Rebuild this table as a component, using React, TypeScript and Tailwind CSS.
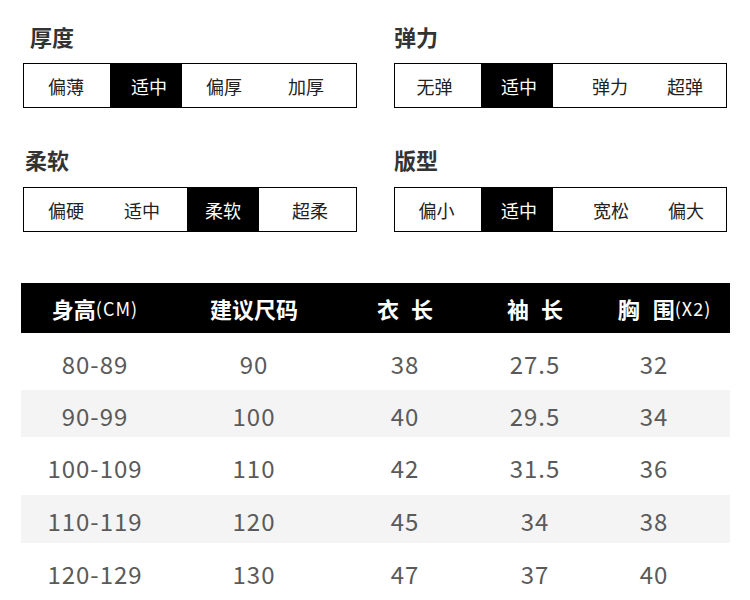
import React from "react";

const font = { fontFamily: '"Noto Sans CJK SC", "Noto Sans", sans-serif' };

type Cell = { t: string; cls: string; active?: boolean };

const groups: { title: string; titleCls: string; boxCls: string; cells: Cell[] }[][] = [
  [
    {
      title: "厚度",
      titleCls: "ml-[7px]",
      boxCls: "mt-[13px]",
      cells: [
        { t: "偏薄", cls: "w-[86px] pr-[2px]" },
        { t: "适中", cls: "w-[72px] pl-[6px]", active: true },
        { t: "偏厚", cls: "w-[84px]" },
        { t: "加厚", cls: "flex-1 pr-[10px]" },
      ],
    },
    {
      title: "柔软",
      titleCls: "ml-[2px] mt-[37px]",
      boxCls: "mt-[14px]",
      cells: [
        { t: "偏硬", cls: "w-[84px]" },
        { t: "适中", cls: "w-[79px] pr-[11px]" },
        { t: "柔软", cls: "w-[72px]", active: true },
        { t: "超柔", cls: "flex-1 pl-[5px]" },
      ],
    },
  ],
  [
    {
      title: "弹力",
      titleCls: "",
      boxCls: "mt-[13px]",
      cells: [
        { t: "无弹", cls: "w-[86px] pr-[7px]" },
        { t: "适中", cls: "w-[72px] pl-[4px]", active: true },
        { t: "弹力", cls: "w-[114px]" },
        { t: "超弹", cls: "flex-1 pr-[23px]" },
      ],
    },
    {
      title: "版型",
      titleCls: "mt-[37px]",
      boxCls: "mt-[14px]",
      cells: [
        { t: "偏小", cls: "w-[86px] pr-[3px]" },
        { t: "适中", cls: "w-[72px] pl-[4px]", active: true },
        { t: "宽松", cls: "w-[114px] pl-[2px]" },
        { t: "偏大", cls: "flex-1 pr-[21px]" },
      ],
    },
  ],
];

const rows = [
  ["80-89", "90", "38", "27.5", "32"],
  ["90-99", "100", "40", "29.5", "34"],
  ["100-109", "110", "42", "31.5", "36"],
  ["110-119", "120", "45", "34", "38"],
  ["120-129", "130", "47", "37", "40"],
];

const rowCls = [
  "h-[57px] bg-white",
  "h-[47px] bg-[#f4f4f4]",
  "h-[58px] bg-white",
  "h-[48px] bg-[#f4f4f4]",
  "h-[57px] bg-white",
];

const cols = "grid grid-cols-[148px_170px_132px_128px_131px]";

export default function App() {
  return (
    <div className="w-[750px] h-[600px] bg-white overflow-hidden" style={font}>
      <div className="grid grid-cols-[334px_333px] gap-x-[37px] pl-[23px] pt-[22px]">
        {groups.map((col, ci) => (
          <div key={ci} className="flex flex-col">
            {col.map((g) => (
              <div key={g.title} className="flex flex-col">
                <div className={`h-[28px] leading-[28px] text-[22px] font-bold text-[#333] ${g.titleCls}`}>
                  {g.title}
                </div>
                <div className={`flex h-[45px] border border-black ${g.boxCls}`}>
                  {g.cells.map((c) => (
                    <div
                      key={c.t}
                      className={`flex items-center justify-center pt-[2px] text-[18px] ${c.cls} ${
                        c.active ? "bg-black text-white" : "text-[#222]"
                      }`}
                    >
                      {c.t}
                    </div>
                  ))}
                </div>
              </div>
            ))}
          </div>
        ))}
      </div>

      <div className="mt-[51px] ml-[21px] w-[709px]">
        <div className={`${cols} h-[50px] bg-black text-white font-bold text-[22px]`}>
          <div className="flex items-center justify-center">
            身高<span className="font-normal text-[18px] tracking-[1px]">(CM)</span>
          </div>
          <div className="flex items-center justify-center">建议尺码</div>
          <div className="flex items-center justify-center">
            衣<span className="ml-[12px]">长</span>
          </div>
          <div className="flex items-center justify-center">
            袖<span className="ml-[12px]">长</span>
          </div>
          <div className="flex items-center justify-center">
            胸<span className="ml-[13px]">围</span>
            <span className="font-normal text-[18px] tracking-[1px]">(X2)</span>
          </div>
        </div>
        {rows.map((r, i) => (
          <div key={r[0]} className={`${cols} ${rowCls[i]} text-[24px] tracking-[1px] text-[#5a5a5a]`}>
            {r.map((v, j) => (
              <div
                key={j}
                className={`flex items-center justify-center pt-[4px] ${j === 4 ? "pr-[21px]" : ""}`}
              >
                {v}
              </div>
            ))}
          </div>
        ))}
      </div>
    </div>
  );
}
